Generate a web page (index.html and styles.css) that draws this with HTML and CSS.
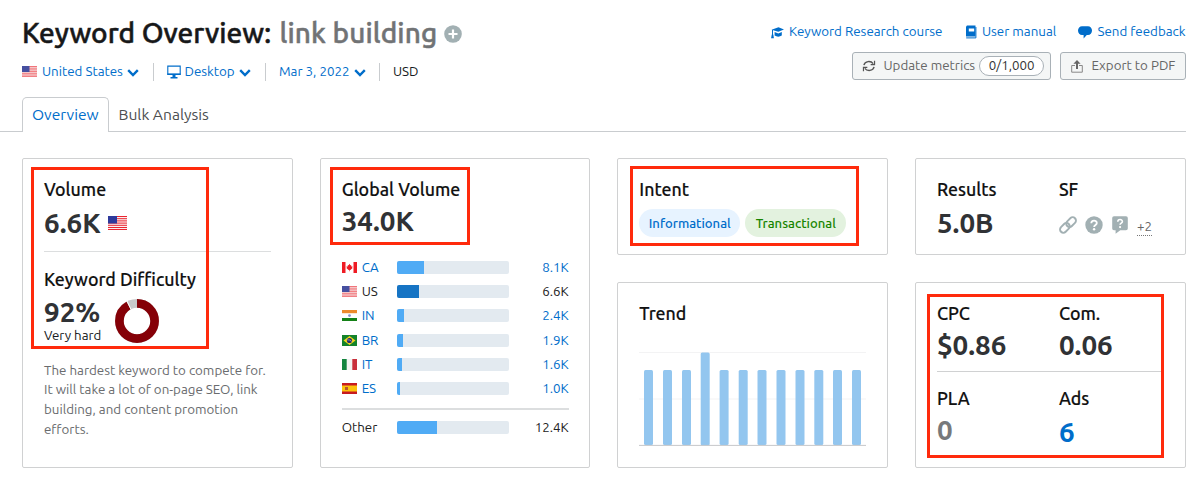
FILE: index.html
```html
<!DOCTYPE html>
<html lang="en">
<head>
<meta charset="utf-8">
<title>Keyword Overview</title>
<link rel="stylesheet" href="styles.css">
</head>
<body>
<svg class="defs" width="0" height="0">
  <symbol id="us" viewBox="0 0 15 11"><path fill="#f6e9ea" d="M0 0h15v11H0z"/><path stroke="#f0686d" stroke-width=".9" d="M0 .5h15M0 2.200h15M0 3.900h15M0 5.600h15M0 7.300h15M0 9h15M0 10.600h15"/><path fill="#4650a0" d="M0 0h7.500v6H0z"/></symbol>
  <symbol id="chev" viewBox="0 0 12 8"><path d="M1.200 1.200 6 6l4.800-4.800" fill="none" stroke="#006dca" stroke-width="2.400"/></symbol>
</svg>
<header class="header">
  <div class="row top">
    <h1 class="title"><span class="t1">Keyword Overview:</span><span class="t2">link building</span>
      <svg class="plus" viewBox="0 0 18 18"><circle cx="9" cy="9" r="8.800" fill="#a2b0b3"/><path d="M9 4.500v9M4.500 9h9" stroke="#fff" stroke-width="2.200"/></svg>
    </h1>
    <nav class="links">
      <a class="l1"><svg width="13" height="13" viewBox="0 0 13 13" fill="#006dca"><path d="M.5 3.800 7.500 1.200 13 3.400 7.300 5.800zM3.600 6v3.600c2.200 1.500 5 1.500 7.200 0V6L7.300 7.500z"/><path d="M1.500 4v5" stroke="#006dca"/><path d="M.8 8.500h1.500l.6 3.800H.1z"/></svg><span>Keyword Research course</span></a>
      <a class="l2"><svg width="12" height="14" viewBox="0 0 12 14"><path d="M2 .5h8.500v11H1V1.500z" fill="#006dca"/><path d="M3.800 3.500h5.400v3H3.800z" fill="#fff"/><path d="M1.200 12.900h9.700V2" fill="none" stroke="#006dca"/></svg><span>User manual</span></a>
      <a class="l3"><svg width="14" height="14" viewBox="0 0 14 14"><path d="M4 1.200h6a4 4.400 0 0 1 0 8.800H8.800L5.600 13.600V10H4A4 4.400 0 0 1 4 1.200z" fill="#006dca"/></svg><span>Send feedback</span></a>
    </nav>
  </div>
  <div class="row bottom">
    <div class="filters">
      <span class="f f1"><svg class="flag"><use href="#us"/></svg><span>United States</span><svg class="chev"><use href="#chev"/></svg></span>
      <span class="f f2"><svg width="14" height="14" viewBox="0 0 14 14"><path d="M.8 1.100h12.400v8.200H.8z" fill="none" stroke="#006dca" stroke-width="1.100"/><path d="M.3 8.600h13.400v1.500H.3zM5.500 10h3v2h2v1.500h-7V12h2z" fill="#006dca"/></svg><span>Desktop</span><svg class="chev"><use href="#chev"/></svg></span>
      <span class="f f3"><span>Mar 3, 2022</span><svg class="chev"><use href="#chev"/></svg></span>
      <span class="f f4"><span>USD</span></span>
    </div>
    <div class="buttons">
      <button class="btn b1"><svg width="14" height="12" viewBox="0 0 15 13" fill="none" stroke="#555" stroke-width="1.500"><path d="M2 5.500C3 1 9.500.5 12 4M13 7.500C12 12 5.500 12.500 3 9"/><path d="M13.500.8v4.300H9.300M1.500 12.200V7.900h4.200" stroke-width="1.300"/></svg><span>Update metrics</span><b class="count">0/1,000</b></button>
      <button class="btn b2"><svg width="12" height="13" viewBox="0 0 12 13"><path d="M4 5.500H.7v6.700h10.600V5.500H8" fill="none" stroke="#888"/><path d="M6 0l3.600 3.800H7V9H5V3.800H2.400z" fill="#666"/></svg><span>Export to PDF</span></button>
    </div>
  </div>
  <div class="tabs"><span class="tab active">Overview</span><span class="tab">Bulk Analysis</span></div>
</header>
<main class="grid">
  <section class="card tall">
    <i class="mark m1"></i>
    <h2>Volume</h2>
    <div class="big vol"><span>6.6K</span><svg class="volflag" viewBox="0 0 19 14"><path fill="#fbeeee" d="M0 0h19v14H0z"/><path stroke="#ea2530" d="M0 .5h19M0 2.700h19M0 4.900h19M0 7.100h19M0 9.300h19M0 11.500h19M0 13.500h19"/><path fill="#2e3a9c" d="M0 0h9v7.500H0z"/></svg></div>
    <hr>
    <h2 class="kd">Keyword Difficulty</h2>
    <div class="difficulty">
      <div><div class="big pct">92%</div><div class="hard">Very hard</div></div>
      <svg width="44" height="44" viewBox="0 0 44 44"><circle cx="22" cy="22" r="17.600" fill="none" stroke="#c8c9ca" stroke-width="8.700"/><circle cx="22" cy="22" r="17.600" fill="none" stroke="#850007" stroke-width="8.700" pathLength="100" stroke-dasharray="92 8" transform="rotate(-90 22 22)"/><path d="M16 10.500 11.800 1.500" stroke="#fff"/></svg>
    </div>
    <p class="desc">The hardest keyword to compete for.<br>It will take a lot of on-page SEO, link<br>building, and content promotion<br>efforts.</p>
  </section>
  <section class="card tall">
    <i class="mark m2"></i>
    <h2 class="gv">Global Volume</h2>
    <div class="big gvn">34.0K</div>
    <div class="countries">
      <div class="c"><svg class="flag" viewBox="0 0 15 11"><path fill="#fff" d="M0 0h15v11H0z"/><path fill="#ef1b24" d="M0 0h3.500v11H0zM11.500 0H15v11h-3.500zM7.500 1.800l.8 1.500.9-.2-.1 1.500 1.400-.3-.4 1.200.5.500L8.400 8H7.800v1.200h-.6V8h-.6L4.400 6l.5-.5-.4-1.200 1.400.3-.1-1.500.9.200z"/></svg><span>CA</span><i class="bar"><i style="width:27px"></i></i><em>8.1K</em></div>
      <div class="c cur"><svg class="flag"><use href="#us"/></svg><span>US</span><i class="bar"><i style="width:22px"></i></i><em>6.6K</em></div>
      <div class="c"><svg class="flag" viewBox="0 0 15 11"><path fill="#fff" d="M0 0h15v11H0z"/><path fill="#ed8b2d" d="M0 0h15v3.200H0z"/><path fill="#148117" d="M0 8h15v3H0z"/><circle cx="7.500" cy="5.600" r="1.400" fill="#8794ce"/></svg><span>IN</span><i class="bar"><i style="width:7.500px"></i></i><em>2.4K</em></div>
      <div class="c"><svg class="flag" viewBox="0 0 15 11"><path fill="#14832b" d="M0 0h15v11H0z"/><path fill="#f4d51c" d="m7.500 1 6 4.500-6 4.500-6-4.500z"/><circle cx="7.500" cy="5.500" r="2.600" fill="#26316f"/><path d="M5.200 4.800q3-.3 4.500 1.700" stroke="#ccd" stroke-width=".6" fill="none"/></svg><span>BR</span><i class="bar"><i style="width:6px"></i></i><em>1.9K</em></div>
      <div class="c"><svg class="flag" viewBox="0 0 15 11"><path fill="#f3f4f2" d="M0 0h15v11H0z"/><path fill="#14853f" d="M0 0h4.700v11H0z"/><path fill="#c9303c" d="M10.300 0H15v11h-4.700z"/></svg><span>IT</span><i class="bar"><i style="width:5.500px"></i></i><em>1.6K</em></div>
      <div class="c"><svg class="flag" viewBox="0 0 15 11"><path fill="#c71a20" d="M0 0h15v11H0z"/><path fill="#fcc20c" d="M0 2.500h15v6H0z"/><path fill="#b8552b" d="M3 4h3v3H3z"/></svg><span>ES</span><i class="bar"><i style="width:3px"></i></i><em>1.0K</em></div>
    </div>
    <div class="c other"><span>Other</span><i class="bar"><i style="width:40.500px"></i></i><em>12.4K</em></div>
  </section>
  <section class="card">
    <i class="mark m3"></i>
    <h2>Intent</h2>
    <div class="pills"><span class="pill info">Informational</span><span class="pill trans">Transactional</span></div>
  </section>
  <section class="card cols">
    <div><h2>Results</h2><div class="big res">5.0B</div></div>
    <div><h2>SF</h2>
      <div class="sf">
        <svg width="18" height="18" viewBox="0 0 18 18" fill="none" stroke="#a2b0b3" stroke-width="1.900"><rect x="6.600" y="2.800" width="11" height="6.600" rx="3.300" transform="rotate(-45 12.100 6.100)"/><rect x=".4" y="8.600" width="11" height="6.600" rx="3.300" transform="rotate(-45 5.900 11.900)"/></svg>
        <svg width="18" height="18" viewBox="0 0 18 18"><circle cx="9" cy="9" r="8.700" fill="#a2b0b3"/><path d="M6.300 7.200c0-3.300 5.500-3.300 5.500-.2C11.800 9 9.100 8.800 9.100 11" fill="none" stroke="#fff" stroke-width="1.800"/><circle cx="9.100" cy="13.300" r="1.200" fill="#fff"/></svg>
        <svg width="16" height="18" viewBox="0 0 16 18"><path d="M2 .3h12q1.800 0 1.800 1.800v10.400q0 1.800-1.800 1.800H8.300L3.600 17.800v-3.500H2Q.2 14.300.2 12.500V2.100Q.2.300 2 .3z" fill="#a2b0b3"/><path d="M5.800 5.700c0-2.800 4.600-2.800 4.600-.2 0 1.700-2.300 1.500-2.300 3.300" fill="none" stroke="#fff" stroke-width="1.600"/><circle cx="8.100" cy="11.100" r="1.100" fill="#fff"/></svg>
        <span>+2</span>
      </div>
    </div>
  </section>
  <section class="card trend">
    <h2>Trend</h2>
    <svg width="227" height="96" viewBox="0 0 227 96">
      <path d="M0 2.500h227M0 49h227" stroke="#f3f3f4"/>
      <g fill="#93c6ef"><rect x="5" y="20" width="9" height="75" rx="1.500"/><rect x="24" y="20" width="9" height="75" rx="1.500"/><rect x="43" y="20" width="9" height="75" rx="1.500"/><rect x="61.700" y="2.500" width="9" height="93" rx="1.500"/><rect x="80.600" y="20" width="9" height="75" rx="1.500"/><rect x="99.700" y="20" width="9" height="75" rx="1.500"/><rect x="118.500" y="20" width="9" height="75" rx="1.500"/><rect x="137.500" y="20" width="9" height="75" rx="1.500"/><rect x="156.500" y="20" width="9" height="75" rx="1.500"/><rect x="175.300" y="20" width="9" height="75" rx="1.500"/><rect x="194" y="20" width="9" height="75" rx="1.500"/><rect x="213" y="20" width="9" height="75" rx="1.500"/></g>
      <path d="M0 95.400h227" stroke="#c6c8ca"/>
    </svg>
  </section>
  <section class="card money">
    <i class="mark m4"></i>
    <div class="cols"><div><h2>CPC</h2><div class="big cpc">$0.86</div></div><div><h2>Com.</h2><div class="big cpc">0.06</div></div></div>
    <hr>
    <div class="cols"><div><h2>PLA</h2><div class="big zero">0</div></div><div><h2>Ads</h2><div class="big ads">6</div></div></div>
  </section>
</main>
</body>
</html>
```
FILE: styles.css
```css
* { box-sizing: border-box; }
body { margin: 0; width: 1200px; height: 479px; overflow: hidden; background: #fff; color: #171a22; font: 13.350px/20px Ubuntu, "Noto Sans", sans-serif; }
h1, h2, p, hr { margin: 0; }
i, em { font-style: normal; display: block; }
svg { flex: none; }
.defs { position: absolute; }
.row { display: flex; justify-content: space-between; padding: 0 14.500px 0 22px; }
.top { height: 51px; padding-top: 12px; }
.title { display: flex; align-items: center; height: 41px; font-size: 28px; font-weight: 500; color: #171819; -webkit-text-stroke: .5px currentColor; white-space: nowrap; }
.t1 { width: 257.500px; }
.t2 { width: 164.500px; color: #717375; letter-spacing: .1px; }
.plus { width: 18px; height: 18px; margin-top: 2px; }
.links { display: flex; height: 40px; align-items: center; color: #006dca; }
.links a { display: flex; align-items: center; gap: 5px; white-space: nowrap; }
.l1 { width: 194px; }
.l2 { width: 113.500px; }
.bottom { height: 46px; }
.filters { display: flex; align-items: center; height: 41px; color: #006dca; }
.f { display: flex; align-items: center; height: 18px; white-space: nowrap; }
.f + .f { border-left: 1px solid #c9cccf; padding-left: 13px; }
.f1 { width: 131px; }
.f2 { width: 112px; }
.f3 { width: 114px; }
.f4 { color: #171a22; }
.flag { width: 15px; height: 11px; margin-right: 5px; }
.f2 > span { margin-left: 3.500px; }
.chev { width: 12px; height: 8px; margin-left: 4px; margin-top: 2px; }
.buttons { display: flex; gap: 9px; padding-top: 1px; }
.btn { display: flex; align-items: center; height: 28px; padding: 0; border: 1px solid #a9b1b7; border-radius: 3px; background: #f4f6f6; color: #666; font: inherit; white-space: nowrap; }
.b1 { width: 199px; padding-left: 9px; gap: 8px; }
.b2 { width: 126px; padding-left: 10px; gap: 9px; }
.count { width: 65px; height: 20px; margin-left: -4px; border: 1px solid #a9b1b7; border-radius: 10px; background: #fff; color: #333; font-weight: 400; line-height: 18px; text-align: center; }
.tabs { display: flex; width: 1186px; height: 35px; padding-left: 22px; border-bottom: 1px solid #c9cccf; font-size: 15.600px; line-height: 35px; }
.tab { padding: 0 10px; color: #4c4e50; white-space: nowrap; }
.active { width: 86.500px; height: 35px; padding: 0 9px; border: 1px solid #c9cccf; border-bottom: 0; border-radius: 5px 5px 0 0; background: #fff; color: #006dca; line-height: 33px; }
.grid { display: grid; grid-template-columns: repeat(4, 1fr); grid-template-rows: 97px 186px; gap: 27px; padding: 26px 14.500px 0 22px; }
.card { position: relative; min-width: 0; padding: 18px 21px 0; border: 1px solid #d0d1d2; border-radius: 2px; }
.tall { grid-row: 1 / 3; }
.mark { position: absolute; border: 3px solid #ff2a0c; }
.m1 { left: 8px; top: 8px; width: 178px; height: 182px; }
.m2 { left: 9px; top: 8px; width: 140px; height: 78px; }
.m3 { left: 12px; top: 7px; width: 229px; height: 80px; }
.m4 { left: 11px; top: 11px; width: 237px; height: 164px; }
h2 { font-size: 17.800px; font-weight: 500; line-height: 25px; color: #111; -webkit-text-stroke: .15px currentColor; white-space: nowrap; }
.big { font-size: 27.800px; font-weight: 700; line-height: 36px; color: #303235; white-space: nowrap; }
.vol { display: flex; align-items: center; margin-top: 3px; }
.volflag { width: 19px; height: 14px; margin-left: 7px; }
hr { height: 1px; border: 0; background: #dcdedf; }
.vol + hr { margin-top: 10px; margin-bottom: 15px; }
.difficulty { display: flex; }
.difficulty > div { width: 71px; }
.pct { margin-top: 2px; height: 35px; }
.hard { line-height: 14px; font-size: 13.300px; white-space: nowrap; }
.difficulty svg { margin-top: 7px; }
.desc { margin-top: 17.500px; color: #696b6e; line-height: 19.800px; white-space: nowrap; }
.gvn { margin-top: 1px; }
.countries { margin-top: 16.500px; padding-bottom: 7px; border-bottom: 2px solid #dcdedf; width: 227px; }
.c { display: flex; align-items: center; height: 24.200px; width: 227px; color: #006dca; }
.c > span { width: 35px; padding-top: 1px; white-space: nowrap; }
.c em { margin-left: auto; padding-top: 1px; }
.cur, .other { color: #222; }
.bar { width: 112px; height: 13px; border-radius: 2px; overflow: hidden; background: #e3eaf0; }
.bar i { height: 13px; background: #50abf5; }
.cur .bar i { background: #1674c4; }
.other { margin-top: 6px; }
.other > span { width: 55px; }
.pills { display: flex; gap: 5px; margin-top: 7px; }
.pill { width: 101px; height: 28px; border-radius: 14px; background: #e7f3ff; color: #006dca; font-size: 13.100px; line-height: 28px; text-align: center; font-weight: 500; }
.trans { background: #e3f2df; color: #178500; }
.cols { display: grid; grid-template-columns: 122px 1fr; }
.res { margin-top: 3px; }
.sf { display: flex; align-items: center; height: 22px; margin-top: 12px; gap: 9px; }
.sf svg + svg { margin-left: -.5px; }
.sf span { border-bottom: 1px dotted #777; color: #666; line-height: 17px; margin-top: 3px; }
.trend svg { display: block; margin-top: 24px; }
.cpc { margin-top: 1px; }
.money { padding-right: 0; }
.money hr { width: 226px; margin-top: 8px; margin-bottom: 14px; background: #d0d1d2; }
.zero { color: #77797b; margin-top: 1px; }
.ads { color: #006dca; margin-top: 3px; }
```
